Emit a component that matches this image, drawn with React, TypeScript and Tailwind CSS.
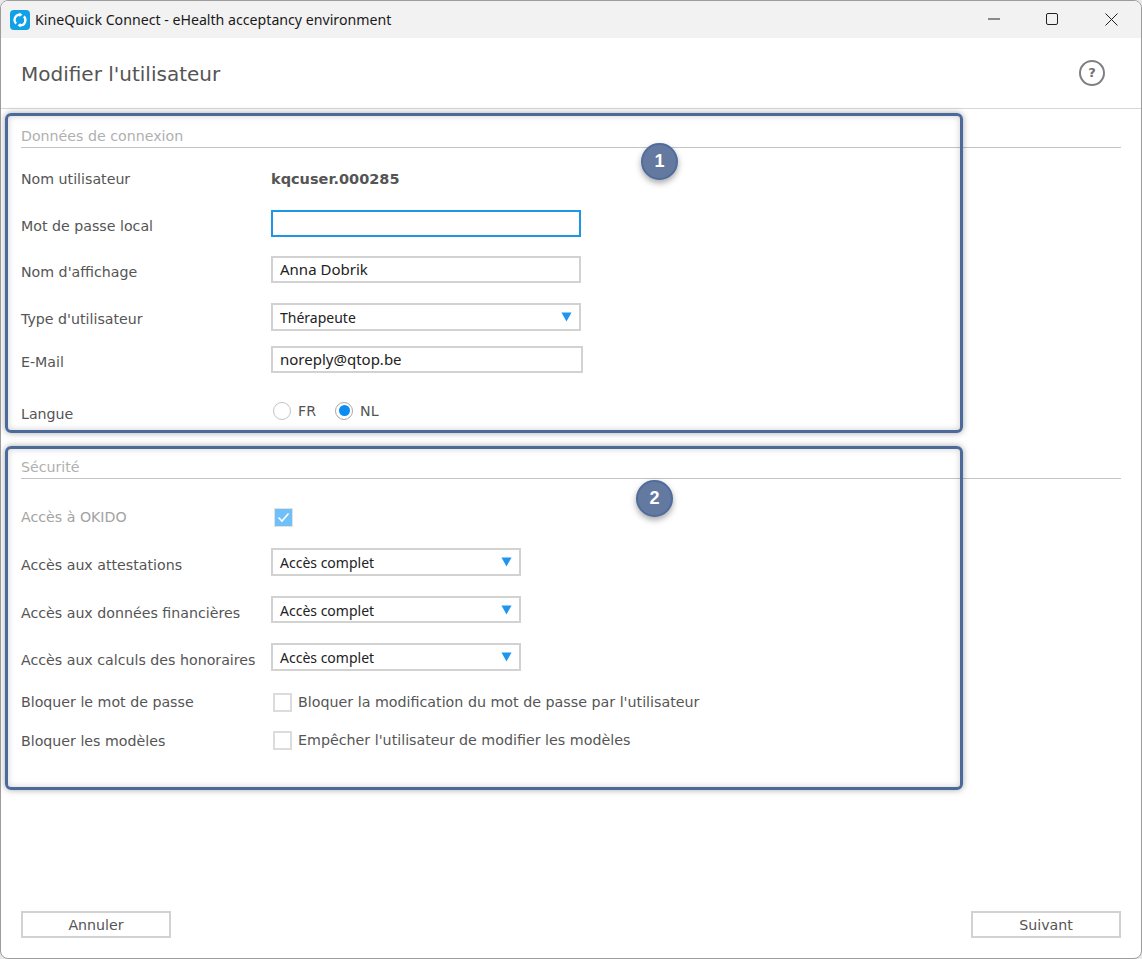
import React from "react";

const FONT = "font-['DejaVu_Sans',sans-serif]";

function Arrow() {
  return (
    <svg width="11" height="10" viewBox="0 0 11 10" className="absolute right-[7px] top-[7px]">
      <path d="M0.5 0.5H10.5L5.5 9.5Z" fill="#1e96f0" />
    </svg>
  );
}

function Select({ value, w, tall = true }: { value: string; w: string; tall?: boolean }) {
  return (
    <div className={`relative flex items-center ${w} ${tall ? "h-[28px]" : "h-[27px]"} border-2 border-[#d2d2d2] bg-white pl-[7px] pt-[1px] font-['Noto_Sans',sans-serif] text-[14px] text-[#222222]`}>
      {value}
      <Arrow />
    </div>
  );
}

function Input({ value, w = "w-[310px]", focus = false }: { value?: string; w?: string; focus?: boolean }) {
  return (
    <div className={`flex items-center h-[27px] ${w} ${focus ? "border-[2.5px] border-[#1e96e8]" : "border-2 border-[#d2d2d2]"} bg-white pl-[7px] pb-[1px] font-['Noto_Sans',sans-serif] text-[15px] text-[#222222]`}>
      {value}
    </div>
  );
}

function Row({ label, children, h, mt, shift = "pt-[6px]", muted = false }: { label: string; children?: React.ReactNode; h: string; mt: string; shift?: string; muted?: boolean }) {
  return (
    <div className={`flex items-center ${h} ${mt}`}>
      <div className={`w-[250px] shrink-0 whitespace-nowrap ${shift} text-[14.2px] ${muted ? "text-[#a3a3a3]" : "text-[#555555]"}`}>{label}</div>
      {children}
    </div>
  );
}

function Heading({ title, mt }: { title: string; mt: string }) {
  return (
    <div className={`h-[23px] ${mt} border-b border-[#c4c4c4] text-[14.2px] leading-[23px] text-[#b0b0b0]`}>{title}</div>
  );
}

function Check({ label }: { label: string }) {
  return (
    <div className="flex items-center pl-[2px] text-[14.25px] text-[#555555]">
      <div className="w-[19px] h-[19px] border-2 border-[#dcdcdc] bg-white mr-[6px]" />
      <span className="pt-[2px]">{label}</span>
    </div>
  );
}

function Radio({ label, on = false }: { label: string; on?: boolean }) {
  return (
    <div className="flex items-center text-[14.2px] text-[#555555]">
      <div className={`flex items-center justify-center w-[18px] h-[18px] rounded-full border ${on ? "border-[#a8a8a8]" : "border-[#c4c4c4]"} bg-white mr-[7px]`}>
        {on && <div className="w-[11px] h-[11px] rounded-full bg-[#0a8cf0]" />}
      </div>
      <span className="pt-[2px]">{label}</span>
    </div>
  );
}

function Frame({ cls }: { cls: string }) {
  return (
    <div className={`absolute left-[5px] w-[958px] border-[3px] border-[#4b6a9b] rounded-[6px] shadow-[0_0_6px_rgba(60,60,60,0.45),inset_0_0_6px_rgba(60,60,60,0.25)] pointer-events-none ${cls}`} />
  );
}

function Badge({ n, cls }: { n: string; cls: string }) {
  return (
    <div className={`absolute flex items-center justify-center w-[37px] h-[37px] rounded-full bg-[#64799f] border-2 border-[#4f6c9c] text-white font-['Liberation_Sans',sans-serif] font-bold text-[18px] shadow-[0_3px_6px_rgba(0,0,0,0.35)] ${cls}`}>
      {n}
    </div>
  );
}

export default function App() {
  return (
    <div className={`relative w-[1142px] h-[959px] overflow-hidden bg-[#e9e9e9] ${FONT}`}>
      <div className="flex flex-col w-full h-full bg-white border border-[#9c9c9c] rounded-[8px] overflow-hidden">
        <div className="flex items-center shrink-0 h-[37px] bg-[#f2f2f2] font-['Noto_Sans',sans-serif] text-[14.16px] text-[#1a1a1a]">
          <svg width="20" height="20" viewBox="0 0 20 20" className="ml-[9px] mr-[5px]">
            <rect width="20" height="20" rx="4" fill="#12a0e6" />
            <path d="M10 4.6A5.2 5.2 0 0 0 6.2 13.6" fill="none" stroke="#fff" strokeWidth="2.2" />
            <path d="M10 15.4A5.2 5.2 0 0 0 13.8 6.4" fill="none" stroke="#fff" strokeWidth="2.2" />
            <path d="M9.5 2.4V7L12.4 4.7Z M10.5 17.6V13L7.6 15.3Z" fill="#fff" />
          </svg>
          <span>KineQuick Connect - eHealth acceptancy environment</span>
          <div className="ml-auto flex items-center pb-[1px] text-[#1a1a1a]">
            <svg width="12" height="12" viewBox="0 0 12 12" className="mr-[46px]"><path d="M0 6H12" stroke="#222" strokeWidth="1" /></svg>
            <svg width="12" height="12" viewBox="0 0 12 12" className="mr-[47px]"><rect x="0.5" y="0.5" width="11" height="11" rx="1.5" fill="none" stroke="#222" strokeWidth="1" /></svg>
            <svg width="13" height="13" viewBox="0 0 13 13" className="mr-[23px]"><path d="M0.5 0.5L12.5 12.5M12.5 0.5L0.5 12.5" stroke="#222" strokeWidth="1" /></svg>
          </div>
        </div>
        <div className="flex items-center shrink-0 justify-between h-[71px] pl-[20px] pr-[36px] border-b border-[#d6d6d6]">
          <div className="pt-[2px] text-[20px] text-[#555555]">Modifier l'utilisateur</div>
          <div className="flex items-center justify-center w-[26px] h-[26px] rounded-full border-2 border-[#808080] text-[13px] font-bold text-[#707070]">?</div>
        </div>
        <div className="flex-1 flex flex-col px-[20px]">
          <Heading title="Données de connexion" mt="mt-[16px]" />
          <Row label="Nom utilisateur" h="h-[62px]" mt="mt-0" shift="pt-[2px]">
            <div className="pt-[2px] text-[14.5px] font-bold text-[#555555]">kqcuser.000285</div>
          </Row>
          <Row label="Mot de passe local" h="h-[27px]" mt="mt-0"><Input focus /></Row>
          <Row label="Nom d'affichage" h="h-[27px]" mt="mt-[19px]"><Input value="Anna Dobrik" /></Row>
          <Row label="Type d'utilisateur" h="h-[28px]" mt="mt-[20px]" shift="pt-[6px]"><Select value="Thérapeute" w="w-[310px]" /></Row>
          <Row label="E-Mail" h="h-[27px]" mt="mt-[15px]"><Input value="noreply@qtop.be" w="w-[312px]" /></Row>
          <Row label="Langue" h="h-[28px]" mt="mt-[24px]" shift="pt-[7px]">
            <div className="flex items-center gap-[19px] pl-[2px]">
              <Radio label="FR" />
              <Radio label="NL" on />
            </div>
          </Row>
          <Heading title="Sécurité" mt="mt-[31px]" />
          <Row label="Accès à OKIDO" h="h-[28px]" mt="mt-[24px]" shift="pt-[2px]" muted>
            <div className="ml-[3px] flex items-center justify-center w-[19px] h-[19px] bg-[#6fc0f8] border border-[#e2e2e2]">
              <svg width="13" height="11" viewBox="0 0 13 11"><path d="M1.5 5.5L5 9L11.5 1.5" fill="none" stroke="#fff" strokeWidth="1.6" /></svg>
            </div>
          </Row>
          <Row label="Accès aux attestations" h="h-[28px]" mt="mt-[17px]" shift="pt-[8px]"><Select value="Accès complet" w="w-[250px]" /></Row>
          <Row label="Accès aux données financières" h="h-[27px]" mt="mt-[20px]" shift="pt-[8px]"><Select value="Accès complet" w="w-[250px]" tall={false} /></Row>
          <Row label="Accès aux calculs des honoraires" h="h-[28px]" mt="mt-[20px]" shift="pt-[8px]"><Select value="Accès complet" w="w-[250px]" /></Row>
          <Row label="Bloquer le mot de passe" h="h-[20px]" mt="mt-[21px]" shift="pt-[2px]"><Check label="Bloquer la modification du mot de passe par l'utilisateur" /></Row>
          <Row label="Bloquer les modèles" h="h-[20px]" mt="mt-[18px]" shift="pt-[3px]"><Check label="Empêcher l'utilisateur de modifier les modèles" /></Row>
          <div className="mt-auto mb-[20px] flex justify-between">
            <div className="flex items-center justify-center w-[150px] h-[27px] border-2 border-[#d2d2d2] pt-[2px] text-[14.2px] text-[#555555]">Annuler</div>
            <div className="flex items-center justify-center w-[150px] h-[27px] border-2 border-[#d2d2d2] pt-[2px] text-[14.2px] text-[#555555]">Suivant</div>
          </div>
        </div>
      </div>
      <Frame cls="top-[113px] h-[320px]" />
      <Frame cls="top-[446px] h-[344px]" />
      <Badge n="1" cls="left-[641px] top-[143px]" />
      <Badge n="2" cls="left-[636px] top-[480px]" />
    </div>
  );
}
